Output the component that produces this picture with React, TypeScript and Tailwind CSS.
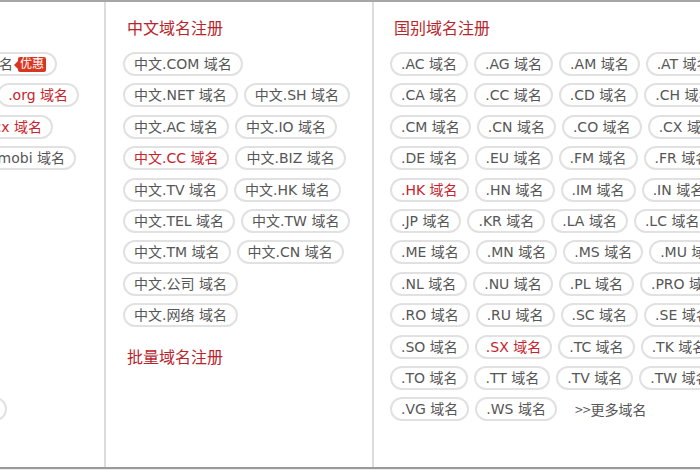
import React from "react";

const font = {
  fontFamily: '"DejaVu Sans", "Noto Sans CJK SC", sans-serif',
};

type PillItem = { label: string; red?: boolean; badge?: boolean };

function Pill({ label, red, badge }: PillItem) {
  return (
    <span
      className={
        "flex h-[24px] shrink-0 items-center whitespace-nowrap rounded-full border-2 border-[#e1e1e1] bg-white px-[9px] text-[14px] leading-[20px] " +
        (red ? "text-[#c8232c]" : "text-[#565656]")
      }
    >
      {label}
      {badge && (
        <span className="relative ml-[5px] rounded-[2px] bg-[#d9361f] px-[2px] text-[12px] leading-[15px] text-white">
          <span className="absolute left-[-4px] top-[4px] h-0 w-0 border-y-[4px] border-r-[4px] border-y-transparent border-r-[#d9361f]" />
          优惠
        </span>
      )}
    </span>
  );
}

function Title({ children }: { children: React.ReactNode }) {
  return (
    <div
      className="h-[24px] pl-[4px] text-[16px] leading-[24px] text-[#b8262d]"
      style={{ fontFamily: '"Noto Sans CJK SC", sans-serif' }}
    >
      {children}
    </div>
  );
}

const leftRows: { item?: PillItem; pr: number }[] = [
  { item: { label: ".com 域名", badge: true }, pr: 47 },
  { item: { label: ".org 域名", red: true }, pr: 25 },
  { item: { label: ".cx 域名", red: true }, pr: 51 },
  { item: { label: ".mobi 域名" }, pr: 28 },
  { pr: 0 },
  { pr: 0 },
  { pr: 0 },
  { pr: 0 },
  { pr: 0 },
  { pr: 0 },
  { pr: 0 },
  { item: { label: ".info 域名" }, pr: 97 },
];

const cnRows: PillItem[][] = [
  [{ label: "中文.COM 域名" }],
  [{ label: "中文.NET 域名" }, { label: "中文.SH 域名" }],
  [{ label: "中文.AC 域名" }, { label: "中文.IO 域名" }],
  [{ label: "中文.CC 域名", red: true }, { label: "中文.BIZ 域名" }],
  [{ label: "中文.TV 域名" }, { label: "中文.HK 域名" }],
  [{ label: "中文.TEL 域名" }, { label: "中文.TW 域名" }],
  [{ label: "中文.TM 域名" }, { label: "中文.CN 域名" }],
  [{ label: "中文.公司 域名" }],
  [{ label: "中文.网络 域名" }],
];

const ccRows: string[][] = [
  [".AC", ".AG", ".AM", ".AT"],
  [".CA", ".CC", ".CD", ".CH"],
  [".CM", ".CN", ".CO", ".CX"],
  [".DE", ".EU", ".FM", ".FR"],
  [".HK", ".HN", ".IM", ".IN"],
  [".JP", ".KR", ".LA", ".LC"],
  [".ME", ".MN", ".MS", ".MU"],
  [".NL", ".NU", ".PL", ".PRO"],
  [".RO", ".RU", ".SC", ".SE"],
  [".SO", ".SX", ".TC", ".TK"],
  [".TO", ".TT", ".TV", ".TW"],
  [".VG", ".WS"],
];

const redCc = [".HK", ".SX"];

export default function App() {
  return (
    <div className="h-[470px] w-[700px] overflow-hidden bg-white" style={font}>
      <div className="h-[2px] bg-[#a6a6a6]" />
      <div className="flex h-[465px]">
        {/* left column, mostly scrolled out of view */}
        <div className="w-[104px] shrink-0 overflow-hidden pt-[50px]">
          <div className="flex flex-col items-end gap-y-[7.4px]">
            {leftRows.map((r, i) => (
              <div key={i} className="flex h-[24px] justify-end" style={{ paddingRight: r.pr }}>
                {r.item && <Pill {...r.item} />}
              </div>
            ))}
          </div>
        </div>
        <div className="w-[2px] shrink-0 bg-[#dcdcdc]" />

        {/* 中文域名 */}
        <div className="w-[266px] shrink-0 pl-[17px] pt-[13px]">
          <Title>中文域名注册</Title>
          <div className="mt-[13px] flex flex-col gap-y-[7.4px]">
            {cnRows.map((row, i) => (
              <div key={i} className="flex gap-x-[6px]">
                {row.map((p) => (
                  <Pill key={p.label} {...p} />
                ))}
              </div>
            ))}
          </div>
          <div className="mt-[17px]">
            <Title>批量域名注册</Title>
          </div>
        </div>
        <div className="w-[2px] shrink-0 bg-[#dcdcdc]" />

        {/* 国别域名 */}
        <div className="min-w-0 flex-1 overflow-hidden pl-[16px] pt-[13px]">
          <Title>国别域名注册</Title>
          <div className="mt-[13px] flex flex-col gap-y-[7.4px]">
            {ccRows.map((row, i) => (
              <div key={i} className="flex items-center gap-x-[6px]">
                {row.map((c) => (
                  <Pill key={c} label={`${c} 域名`} red={redCc.includes(c)} />
                ))}
                {i === ccRows.length - 1 && (
                  <span
                    className="ml-[12px] whitespace-nowrap text-[14px] text-[#565656]"
                    style={{ fontFamily: '"Noto Sans CJK SC", sans-serif' }}
                  >
                    &gt;&gt;更多域名
                  </span>
                )}
              </div>
            ))}
          </div>
        </div>
      </div>
      <div className="h-[2px] bg-[#9a9a9a]" />
      <div className="h-[1px] bg-[#ececec]" />
    </div>
  );
}
